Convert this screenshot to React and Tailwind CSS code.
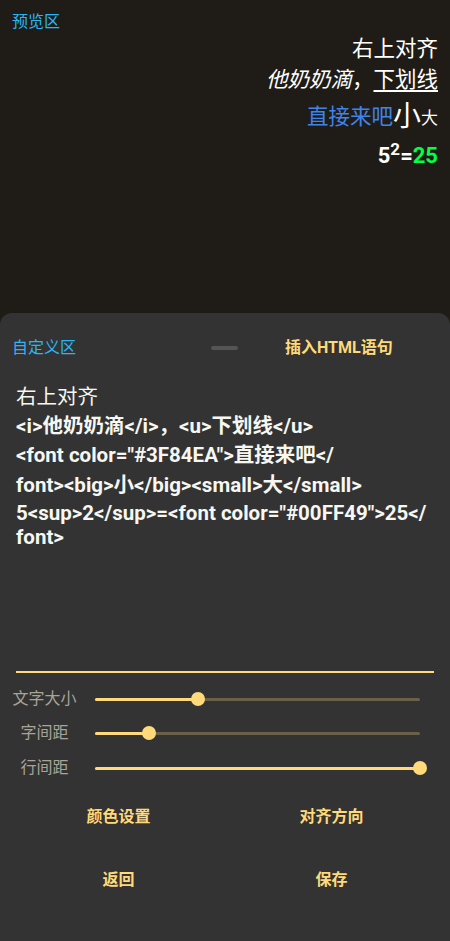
import React from 'react';

const FONT = { fontFamily: 'Roboto, "Noto Sans CJK SC", sans-serif' };

const sliders = [
    { label: '文字大小', value: 0.317 },
    { label: '字间距', value: 0.166 },
    { label: '行间距', value: 1 },
];

const Slider = ({ label, value, h }) => (
    <div className={`flex items-center ${h}`}>
        <div className="w-[65px] text-center text-[16px] text-[#a8a498]">{label}</div>
        <div className="relative ml-[18px] mr-[30px] h-[3px] flex-1 rounded-full bg-[#6a604a]">
            <div className="absolute left-0 top-0 h-[3px] rounded-full bg-[#ffd97a]" style={{ width: `${value * 100}%` }} />
            <div
                className="absolute top-1/2 h-[14px] w-[14px] -translate-x-1/2 -translate-y-1/2 rounded-full bg-[#ffd97a]"
                style={{ left: `${value * 100}%` }}
            />
        </div>
    </div>
);

const App = () => {
    return (
        <div className="flex h-[941px] w-[450px] flex-col overflow-hidden bg-[#1f1c17]" style={FONT}>
            {/* 预览区 */}
            <div className="h-[313px] shrink-0 px-3 pt-[11px]">
                <div className="text-[16px] leading-[22px] text-[#29b6f6]">预览区</div>
                <div className="text-right text-[21.5px] text-white">
                    <div className="leading-[31px]">右上对齐</div>
                    <div className="leading-[31px]">
                        <i>他奶奶滴</i>，<u className="underline-offset-[3px]">下划线</u>
                    </div>
                    <div className="flex h-[44px] items-center justify-end">
                        <span className="text-[#3F84EA]">直接来吧</span>
                        <span className="text-[28px] leading-[30px]">小</span>
                        <span className="mt-[4px] text-[17px]">大</span>
                    </div>
                    <div className="h-[33px] whitespace-nowrap text-[22px] font-bold leading-[33px]">
                        5<sup className="text-[17px]">2</sup>=<span className="text-[#00FF49]">25</span>
                    </div>
                </div>
            </div>

            {/* 自定义区 */}
            <div className="flex-1 rounded-t-[12px] bg-[#333333]">
                <div className="mt-[24px] flex h-[22px] items-center pl-3">
                    <div className="w-[64px] text-[16px] text-[#29b6f6]">自定义区</div>
                    <div className="ml-[135px] h-[4px] w-[27px] rounded-full bg-[#555555]" />
                    <div className="ml-[47px] text-[16px] font-bold text-[#ffd97a]">插入HTML语句</div>
                </div>

                <div className="mt-[24px] whitespace-nowrap px-4 text-[20.5px] text-[#f7f7f2]">
                    <div className="h-[28px] leading-[28px]">右上对齐</div>
                    <div className="font-bold">
                        <div className="h-[30px] leading-[30px]">&lt;i&gt;他奶奶滴&lt;/i&gt;，&lt;u&gt;下划线&lt;/u&gt;</div>
                        <div className="h-[28px] leading-[28px]">&lt;font color="#3F84EA"&gt;直接来吧&lt;/</div>
                        <div className="h-[32px] leading-[32px]">font&gt;&lt;big&gt;小&lt;/big&gt;&lt;small&gt;大&lt;/small&gt;</div>
                        <div className="h-[24px] leading-[24px]">5&lt;sup&gt;2&lt;/sup&gt;=&lt;font color="#00FF49"&gt;25&lt;/</div>
                        <div className="h-[24px] leading-[24px]">font&gt;</div>
                    </div>
                </div>

                <div className="mx-4 mt-[122px] h-[2px] bg-[#ffd97a]" />

                <div className="mt-[9px] pl-3">
                    <Slider label={sliders[0].label} value={sliders[0].value} h="h-[34px]" />
                    <Slider label={sliders[1].label} value={sliders[1].value} h="h-[34px]" />
                    <Slider label={sliders[2].label} value={sliders[2].value} h="h-[36px]" />
                </div>

                <div className="grid grid-cols-2 px-3 text-[16px] font-bold text-[#ffd97a]">
                    <div className="flex h-[62px] items-center justify-center">颜色设置</div>
                    <div className="flex h-[62px] items-center justify-center">对齐方向</div>
                    <div className="flex h-[64px] items-center justify-center">返回</div>
                    <div className="flex h-[64px] items-center justify-center">保存</div>
                </div>
            </div>
        </div>
    );
};

export default App;
